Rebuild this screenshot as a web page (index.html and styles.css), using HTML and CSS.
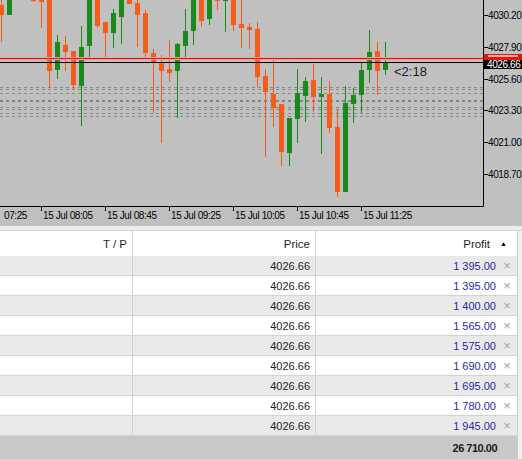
FILE: index.html
```html
<!DOCTYPE html>
<html lang="en">
<head>
    <meta charset="UTF-8">
    <title>US500 M5 - Trade</title>
    <link rel="stylesheet" href="styles.css">
</head>
<body>
    <div class="terminal">
        <div class="chart">
            <svg id="chart" width="522" height="226" viewBox="0 0 522 226">
                <!-- price levels -->
                <g class="levels">
                    <line x1="0" y1="87.5" x2="483" y2="87.5"/>
                    <line x1="0" y1="89.5" x2="483" y2="89.5"/>
                    <line x1="0" y1="93.5" x2="483" y2="93.5"/>
                    <line x1="0" y1="101" x2="483" y2="101" class="thick"/>
                    <line x1="0" y1="107.5" x2="483" y2="107.5"/>
                    <line x1="0" y1="109.5" x2="483" y2="109.5"/>
                    <line x1="0" y1="113.5" x2="483" y2="113.5"/>
                    <line x1="0" y1="116.5" x2="483" y2="116.5"/>
                </g>
                <g id="candles"></g>
                <!-- ask / bid -->
                <line x1="0" y1="58.5" x2="483" y2="58.5" class="ask-glow"/>
                <line x1="0" y1="58.5" x2="483" y2="58.5" class="ask"/>
                <line x1="0" y1="62.5" x2="483" y2="62.5" class="bid"/>
                <text x="394" y="76" class="timer">&lt;2:18</text>
                <!-- axes -->
                <path class="axis" d="M483.5 0 V206.5 H0"/>
                <g class="ticks" id="ticks"></g>
                <g class="labels" id="labels"></g>
                <rect x="484" y="54" width="38" height="7" fill="#e8150f"/>
                <rect x="488" y="55" width="30" height="2" fill="#f6b0a8"/>
                <rect x="484" y="60" width="38" height="9" fill="#000"/>
                <text x="487" y="68" class="tag">4026.66</text>
            </svg>
        </div>
        <div class="split"></div>
        <div class="trades">
            <div class="row head">
                <div class="cell">T / P</div>
                <div class="cell">Price</div>
                <div class="cell profit-head"><span>Profit</span><span class="sort">&#9650;</span></div>
            </div>
            <div class="row odd"><div class="cell"></div><div class="cell">4026.66</div><div class="cell money"><span class="val">1 395.00</span><span class="close">&times;</span></div></div>
            <div class="row"><div class="cell"></div><div class="cell">4026.66</div><div class="cell money"><span class="val">1 395.00</span><span class="close">&times;</span></div></div>
            <div class="row odd"><div class="cell"></div><div class="cell">4026.66</div><div class="cell money"><span class="val">1 400.00</span><span class="close">&times;</span></div></div>
            <div class="row"><div class="cell"></div><div class="cell">4026.66</div><div class="cell money"><span class="val">1 565.00</span><span class="close">&times;</span></div></div>
            <div class="row odd"><div class="cell"></div><div class="cell">4026.66</div><div class="cell money"><span class="val">1 575.00</span><span class="close">&times;</span></div></div>
            <div class="row"><div class="cell"></div><div class="cell">4026.66</div><div class="cell money"><span class="val">1 690.00</span><span class="close">&times;</span></div></div>
            <div class="row odd"><div class="cell"></div><div class="cell">4026.66</div><div class="cell money"><span class="val">1 695.00</span><span class="close">&times;</span></div></div>
            <div class="row"><div class="cell"></div><div class="cell">4026.66</div><div class="cell money"><span class="val">1 780.00</span><span class="close">&times;</span></div></div>
            <div class="row odd"><div class="cell"></div><div class="cell">4026.66</div><div class="cell money"><span class="val">1 945.00</span><span class="close">&times;</span></div></div>
            <div class="row total">
                <div class="cell"></div>
                <div class="cell"></div>
                <div class="cell money"><span class="sum">26 710.00</span><span class="close"></span></div>
            </div>
        </div>
    </div>

    <script>
        const NS = 'http://www.w3.org/2000/svg';

        // [center x, type, wick top, wick bottom, body top, body bottom]
        const candles = [
            [1.5, 'o', 0, 42, 5, 15], [9.5, 'g', 0, 15, 0, 15], [33.5, 'o', 0, 2, 0, 1],
            [41.5, 'o', 0, 28, 0, 2], [49.5, 'o', 0, 88, 0, 71], [57.5, 'g', 35, 79, 42, 70],
            [65.5, 'o', 36, 71, 45, 52], [73.5, 'o', 51, 90, 51, 85], [81.5, 'g', 26, 126, 47, 86],
            [89.5, 'g', 0, 60, 0, 46], [97.5, 'o', 0, 28, 0, 26], [105.5, 'o', 22, 57, 22, 33],
            [113.5, 'g', 9, 48, 13, 33], [121.5, 'g', 0, 44, 0, 17], [129.5, 'o', 0, 4, 0, 4],
            [137.5, 'o', 0, 47, 3, 15], [145.5, 'o', 10, 57, 13, 53], [153.5, 'o', 49, 113, 53, 63],
            [161.5, 'o', 55, 143, 63, 71], [169.5, 'o', 40, 82, 69, 73], [177.5, 'g', 43, 118, 44, 71],
            [185.5, 'g', 9, 58, 31, 46], [193.5, 'g', 0, 45, 0, 31], [201.5, 'o', 0, 27, 0, 21],
            [209.5, 'g', 0, 25, 0, 19], [217.5, 'o', 0, 10, 0, 1], [225.5, 'g', 0, 32, 0, 1],
            [233.5, 'o', 0, 31, 0, 25], [241.5, 'o', 0, 48, 24, 28], [249.5, 'o', 23, 49, 27, 30],
            [257.5, 'o', 22, 87, 29, 77], [265.5, 'o', 69, 157, 76, 92], [273.5, 'o', 60, 127, 94, 108],
            [281.5, 'o', 104, 166, 104, 152], [289.5, 'g', 118, 166, 118, 153], [297.5, 'g', 69, 143, 93, 119],
            [305.5, 'g', 77, 122, 81, 96], [313.5, 'o', 64, 112, 80, 97], [321.5, 'g', 77, 154, 94, 97],
            [329.5, 'o', 81, 133, 94, 128], [337.5, 'o', 110, 197, 127, 192], [345.5, 'g', 86, 192, 103, 192],
            [353.5, 'g', 88, 123, 95, 104], [361.5, 'g', 63, 113, 70, 95], [369.5, 'g', 30, 83, 52, 70],
            [377.5, 'o', 42, 95, 51, 71], [385.5, 'g', 42, 75, 63, 70]
        ];

        function rect(parent, x, y, w, h, cls) {
            const r = document.createElementNS(NS, 'rect');
            r.setAttribute('x', x);
            r.setAttribute('y', y);
            r.setAttribute('width', w);
            r.setAttribute('height', Math.max(h, 1));
            r.setAttribute('class', cls);
            parent.appendChild(r);
        }

        function text(parent, x, y, str) {
            const t = document.createElementNS(NS, 'text');
            t.setAttribute('x', x);
            t.setAttribute('y', y);
            t.textContent = str;
            parent.appendChild(t);
        }

        const group = document.getElementById('candles');
        candles.forEach(c => {
            const x = Math.floor(c[0]);
            const cls = c[1] === 'g' ? 'bull' : 'bear';
            rect(group, x, c[2], 1, c[3] - c[2], cls);
            rect(group, x - 2, c[4], 5, c[5] - c[4], cls);
        });

        const ticks = document.getElementById('ticks');
        const labels = document.getElementById('labels');

        // first label is scrolled off, only its time is left
        text(labels, 4, 219, '07:25');
        const times = ['08:05', '08:45', '09:25', '10:05', '10:45', '11:25'];
        times.forEach((t, i) => {
            const x = 41 + i * 64;
            rect(ticks, x, 207, 1, 4, 'tick');
            text(labels, x + 2, 219, '15 Jul ' + t);
        });

        const prices = ['4030.20', '4027.90', '4025.60', '4023.30', '4021.00', '4018.70'];
        prices.forEach((p, i) => {
            const y = 15 + i * 31.8;
            rect(ticks, 484, Math.round(y), 4, 1, 'tick');
            text(labels, 488, Math.round(y) + 4, p);
        });
    </script>
</body>
</html>
```

FILE: styles.css
```css
body {
    margin: 0;
    background-color: #f0f0f0;
    font-family: 'Liberation Sans', Arial, sans-serif;
    overflow: hidden;
}

.terminal {
    width: 522px;
    height: 459px;
    overflow: hidden;
}

.chart {
    height: 226px;
    background-color: #c0c0c0;
}

.chart svg {
    display: block;
}

.levels line {
    stroke: #8a8a8a;
    stroke-width: 1;
    stroke-dasharray: 3 3;
}

.levels line.thick {
    stroke-width: 2;
    stroke: #848484;
}

.bull {
    fill: #1b8a1b;
}

.bear {
    fill: #f25c1c;
}

.ask {
    stroke: #e8150f;
    stroke-width: 1;
}

.ask-glow {
    stroke: #f2a0a0;
    stroke-width: 3;
}

.bid {
    stroke: #000;
    stroke-width: 1;
}

.axis {
    fill: none;
    stroke: #000;
    stroke-width: 1;
}

.tick {
    fill: #000;
}

.labels text {
    font-size: 10px;
    letter-spacing: -0.4px;
    fill: #000;
}

.timer {
    font-size: 13px;
    fill: #1a1a1a;
}

.tag {
    font-size: 10px;
    letter-spacing: -0.4px;
    fill: #fff;
}

.split {
    height: 4px;
    background-color: #ececec;
    border-bottom: 1px solid #d4d4d4;
}

.trades {
    font-size: 11px;
    color: #1e1e1e;
}

.row {
    display: grid;
    grid-template-columns: 133px 183px 202px;
    height: 19px;
    background-color: #fff;
    border-bottom: 1px solid #d3d3d3;
    width: 518px;
}

.row.odd {
    background-color: #e9e9e9;
}

.row.head {
    height: 25px;
    border-bottom: none;
    background-color: #fff;
}

.cell {
    display: flex;
    align-items: center;
    justify-content: flex-end;
    padding-right: 5px;
    border-right: 1px solid #d0d0d0;
    white-space: nowrap;
}

.head .cell {
    font-size: 11.5px;
}

.profit-head {
    padding-right: 10px;
}

.sort {
    font-size: 7px;
    margin-left: 10px;
    color: #000;
}

.money {
    padding-right: 5px;
}

.val {
    color: #2a2aa6;
}

.close {
    width: 10px;
    margin-left: 6px;
    color: #a6a6a6;
    font-size: 13px;
    text-align: center;
}

.row.total {
    height: 23px;
    border-bottom: none;
    background-color: #c8c8c8;
}

.total .cell {
    border-right: none;
}

.sum {
    font-weight: bold;
    letter-spacing: -0.5px;
    color: #1a1a1a;
}
```
